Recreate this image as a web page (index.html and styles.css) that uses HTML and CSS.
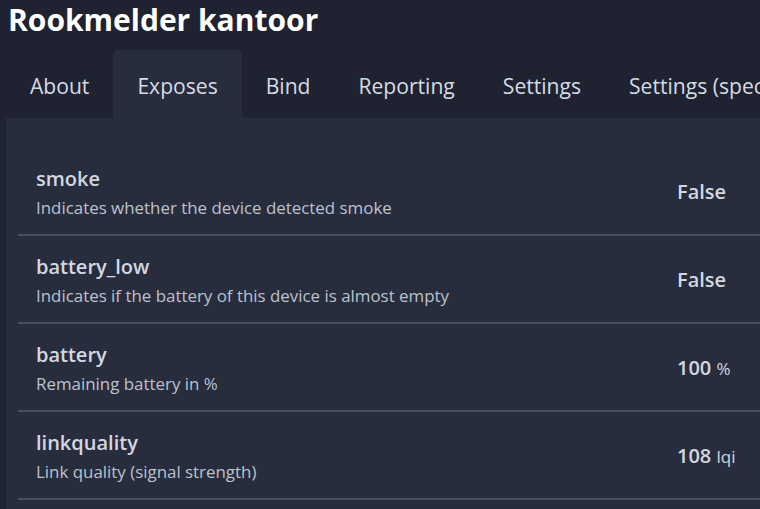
FILE: index.html
```html
<!DOCTYPE html>
<html lang="nl">
<head>
<meta charset="utf-8">
<title>Rookmelder kantoor</title>
<link rel="stylesheet" href="styles.css">
</head>
<body>
<div class="page">
  <h1 class="title">Rookmelder kantoor</h1>
  <nav class="tabs">
    <a class="tab">About</a>
    <a class="tab active">Exposes</a>
    <a class="tab">Bind</a>
    <a class="tab">Reporting</a>
    <a class="tab">Settings</a>
    <a class="tab">Settings (specific)</a>
  </nav>
  <section class="panel">
    <ul class="list">
      <li class="row">
        <div class="info">
          <div class="name">smoke</div>
          <div class="desc">Indicates whether the device detected smoke</div>
        </div>
        <div class="value">False</div>
      </li>
      <li class="row">
        <div class="info">
          <div class="name">battery_low</div>
          <div class="desc">Indicates if the battery of this device is almost empty</div>
        </div>
        <div class="value">False</div>
      </li>
      <li class="row">
        <div class="info">
          <div class="name">battery</div>
          <div class="desc">Remaining battery in %</div>
        </div>
        <div class="value">100 <span class="unit">%</span></div>
      </li>
      <li class="row">
        <div class="info">
          <div class="name">linkquality</div>
          <div class="desc">Link quality (signal strength)</div>
        </div>
        <div class="value">108 <span class="unit">lqi</span></div>
      </li>
    </ul>
  </section>
</div>
</body>
</html>
```
FILE: styles.css
```css
html, body {
  margin: 0;
  padding: 0;
  background: #1f2331;
  overflow: hidden;
  height: 100%;
}
.page {
  width: 800px;
  height: 509px;
  overflow: hidden;
  font-family: "Open Sans", "Noto Sans", sans-serif;
  color: #d3d8e0;
}
.title {
  margin: 0;
  padding: 0 8px;
  font-size: 30px;
  line-height: 40px;
  font-weight: 700;
  color: #ffffff;
  white-space: nowrap;
}
.tabs {
  display: flex;
  margin: 10px 0 0 6px;
  white-space: nowrap;
}
.tab {
  display: block;
  padding: 0 24px;
  height: 68px;
  line-height: 71px;
  font-size: 21.1px;
  color: #d6dbe3;
  border-radius: 5px 5px 0 0;
}
.tab.active {
  background: #282d3e;
}
.panel {
  margin-left: 6px;
  background: #282d3e;
  padding: 30px 0 20px 12px;
  min-height: 400px;
}
.list {
  list-style: none;
  margin: 0;
  padding: 0;
}
.row {
  display: grid;
  grid-template-columns: 641px auto;
  align-items: center;
  height: 86px;
  padding-left: 18px;
  border-bottom: 2px solid #4a4f5e;
}
.info {
  padding-top: 4px;
}
.name {
  font-size: 20px;
  font-weight: 600;
  color: #d3d8e0;
  line-height: 26px;
}
.desc {
  font-size: 16.9px;
  color: #bcc2cc;
  line-height: 24px;
  margin-top: 4px;
}
.value {
  font-size: 20px;
  font-weight: 600;
  color: #d3d8e0;
}
.unit {
  font-size: 17px;
  font-weight: 400;
}
```
